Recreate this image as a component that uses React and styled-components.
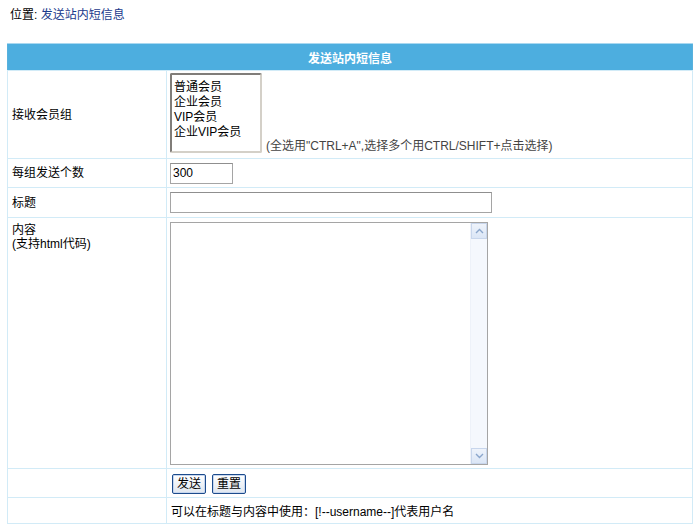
import React from "react"
import styled, {createGlobalStyle} from "styled-components"

const groups = ["普通会员", "企业会员", "VIP会员", "企业VIP会员"]

function App() {
    return (
        <>
            <GlobalStyle />
            <Page>
                <Crumb>位置: <CrumbLink href="#">发送站内短信息</CrumbLink></Crumb>

                <FormTable>
                    <tbody>
                        <tr>
                            <HeadCell colSpan={2}>发送站内短信息</HeadCell>
                        </tr>
                        <tr>
                            <Label $h={88}>接收会员组</Label>
                            <Field $valign="bottom">
                                <GroupRow>
                                    <GroupSelect multiple size={5} defaultValue={[]}>
                                        {groups.map((g) => <option key={g}>{g}</option>)}
                                    </GroupSelect>
                                    <Hint>(全选用"CTRL+A",选择多个用CTRL/SHIFT+点击选择)</Hint>
                                </GroupRow>
                            </Field>
                        </tr>
                        <tr>
                            <Label $h={29}>每组发送个数</Label>
                            <Field>
                                <TextInput $w={63} defaultValue="300" />
                            </Field>
                        </tr>
                        <tr>
                            <Label $h={30}>标题</Label>
                            <Field>
                                <TextInput $w={322} />
                            </Field>
                        </tr>
                        <tr>
                            <Label $h={251} $valign="top">内容<br />(支持html代码)</Label>
                            <Field $valign="top">
                                <AreaFrame>
                                    <Area />
                                    <ScrollTrack>
                                        <ScrollBtn>
                                            <svg width="9" height="6" viewBox="0 0 9 6"><path d="M1 5 L4.5 1.5 L8 5" fill="none" stroke="#8aa6cc" strokeWidth="1.4" /></svg>
                                        </ScrollBtn>
                                        <ScrollBtn>
                                            <svg width="9" height="6" viewBox="0 0 9 6"><path d="M1 1 L4.5 4.5 L8 1" fill="none" stroke="#8aa6cc" strokeWidth="1.4" /></svg>
                                        </ScrollBtn>
                                    </ScrollTrack>
                                </AreaFrame>
                            </Field>
                        </tr>
                        <tr>
                            <Label $h={29}></Label>
                            <Field>
                                <ButtonRow>
                                    <Button>发送</Button>
                                    <Button>重置</Button>
                                </ButtonRow>
                            </Field>
                        </tr>
                        <tr>
                            <Label $h={26}></Label>
                            <Field $pad={4}>可以在标题与内容中使用：[!--username--]代表用户名</Field>
                        </tr>
                    </tbody>
                </FormTable>
            </Page>
        </>
    )
}

const GlobalStyle = createGlobalStyle`
    body {
        margin: 0;
        background: #fff;
        font-family: "Liberation Sans", "Noto Sans CJK SC", sans-serif;
        font-size: 12px;
        color: #000;
    }
`

const Page = styled.div`
    padding: 0 6px 0 7px;
`

const Crumb = styled.div`
    padding: 8px 0 0 3px;
    height: 43px;
    box-sizing: border-box;
    line-height: 14px;
`

const CrumbLink = styled.a`
    color: #1a3a8c;
    text-decoration: none;
`

const FormTable = styled.table`
    width: 686px;
    border-collapse: collapse;
    border: 1px solid #58b1dd;
`

const HeadCell = styled.td`
    height: 26px;
    background: #4daedf;
    border-top: 1px solid #a9d8f0;
    color: #fff;
    font-weight: bold;
    text-align: center;
    padding: 0;
`

const Label = styled.td`
    width: 150px;
    height: ${(p) => p.$h - 1 - (p.$valign === "top" ? 5 : 0)}px;
    border: 1px solid #d2ebf7;
    padding: ${(p) => (p.$valign === "top" ? "5px 4px 0" : "0 4px")};
    vertical-align: ${(p) => p.$valign || "middle"};
    line-height: 14px;
`

const Field = styled.td`
    border: 1px solid #d2ebf7;
    padding: 0 0 0 ${(p) => p.$pad || 3}px;
    vertical-align: ${(p) => p.$valign || "middle"};
`

const GroupRow = styled.div`
    display: flex;
    align-items: flex-end;
    padding-bottom: 5px;
`

const GroupSelect = styled.select`
    width: 92px;
    height: 80px;
    box-sizing: border-box;
    border: 2px inset #d4d0c8;
    font: inherit;
    font-size: 12px;
    padding: 2px 0 0 2px;
    margin: 0;
    overflow: hidden;
    background: #fff;

    option {
        padding: 0;
        line-height: 15px;
        height: 15px;
        color: #000;
    }
`

const Hint = styled.span`
    margin-left: 4px;
    color: #444;
    line-height: 14px;
`

const TextInput = styled.input`
    display: block;
    width: ${(p) => p.$w}px;
    height: 21px;
    box-sizing: border-box;
    border: 1px solid #a5a5a5;
    border-top-color: #8f8f8f;
    font: inherit;
    font-size: 12px;
    padding: 1px 2px;
    margin: 0;
    outline: none;
`

const AreaFrame = styled.div`
    display: flex;
    width: 318px;
    height: 243px;
    box-sizing: border-box;
    border: 1px solid #a5a5a5;
    margin-top: 4px;
    background: #fff;
`

const Area = styled.textarea`
    flex: 1;
    border: none;
    resize: none;
    outline: none;
    margin: 0;
    padding: 2px;
    font: inherit;
`

const ScrollTrack = styled.div`
    width: 16px;
    display: flex;
    flex-direction: column;
    justify-content: space-between;
    background: #f5f8fd;
    border-left: 1px solid #eef2f9;
`

const ScrollBtn = styled.div`
    height: 16px;
    display: flex;
    align-items: center;
    justify-content: center;
    background: linear-gradient(#eef3fb, #dbe6f6);
    border: 1px solid #c8d6ec;
    box-sizing: border-box;
`

const ButtonRow = styled.div`
    display: flex;
    gap: 6px;
    padding-left: 2px;
    padding-top: 1px;
`

const Button = styled.button`
    height: 20px;
    padding: 0 4px;
    box-sizing: border-box;
    border: 1px solid #1c4b8c;
    border-radius: 2px;
    background: linear-gradient(#ffffff, #dfe6ef);
    box-shadow: inset 0 0 0 1px #c6d6ee;
    font: inherit;
    font-size: 12px;
    color: #000;
    line-height: 16px;
`

export default App
